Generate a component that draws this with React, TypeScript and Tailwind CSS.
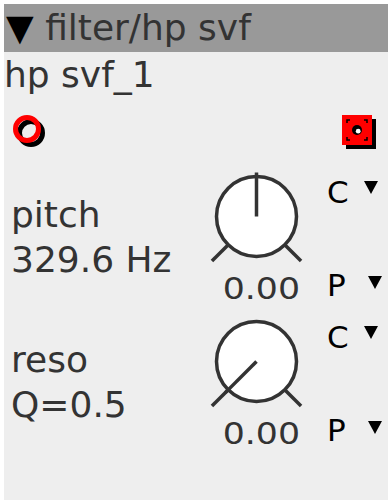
import React from 'react';

const INK = '#333333';

function Inlet() {
  return (
    <svg width="36" height="36" viewBox="0 0 36 36">
      <circle cx="20" cy="20" r="11.5" fill="none" stroke="#000" strokeWidth="5" />
      <circle cx="16" cy="16" r="11.5" fill="none" stroke="#ff0000" strokeWidth="5" />
    </svg>
  );
}

function Outlet() {
  return (
    <svg width="36" height="36" viewBox="0 0 36 36">
      <rect x="6" y="6" width="30" height="30" fill="#000" />
      <rect x="2" y="2" width="30" height="30" fill="#ff0000" />
      {/* focus corners */}
      <path
        d="M7 10 V7 H10 M24 7 H27 V10 M7 24 V27 H10 M24 27 H27 V24"
        fill="none"
        stroke="#000"
        strokeWidth="1.5"
      />
      <circle cx="17" cy="17" r="5" fill="#000" />
      <circle cx="18.2" cy="18.2" r="2.4" fill="#fff" />
    </svg>
  );
}

function Knob({ angle }: { angle: number }) {
  // angle in degrees, 0 = up, negative = counter-clockwise
  const cx = 50.5;
  const cy = 46.5;
  const rad = (angle * Math.PI) / 180;
  const px = cx + Math.sin(rad) * 44;
  const py = cy - Math.cos(rad) * 44;
  const d = Math.SQRT1_2;
  return (
    <svg width="100" height="95" viewBox="0 0 100 95">
      <circle cx={cx} cy={cy} r="40" fill="#fff" stroke={INK} strokeWidth="3.5" />
      <line x1={cx - 41 * d} y1={cy + 41 * d} x2={cx - 63 * d} y2={cy + 63 * d} stroke={INK} strokeWidth="3.5" />
      <line x1={cx + 41 * d} y1={cy + 41 * d} x2={cx + 63 * d} y2={cy + 63 * d} stroke={INK} strokeWidth="3.5" />
      <line x1={cx} y1={cy} x2={px} y2={py} stroke={INK} strokeWidth="3.5" />
    </svg>
  );
}

function Arrow() {
  return (
    <svg width="14" height="13" viewBox="0 0 14 13">
      <polygon points="0,0 14,0 7,13" fill="#000" />
    </svg>
  );
}

function ParamRow({ name, value, angle }: { name: string; value: string; angle: number }) {
  return (
    <div className="flex h-[145px]">
      <div className="w-[202px] pl-[7px] pt-[22px] text-[36px] leading-[45px] text-[#333]">
        <div>{name}</div>
        <div>{value}</div>
      </div>
      <div className="w-[100px] flex flex-col">
        <Knob angle={angle} />
        <div className="mt-[8px] pr-[6px] text-right text-[31px] leading-[31px] text-[#333]">
          <span className="inline-block origin-right scale-x-[1.12]">0.00</span>
        </div>
      </div>
      <div className="flex-1 pl-[21px] pt-[7px] text-[31px] leading-[31px] text-black">
        <div className="flex items-start">
          <span className="w-[22px]">C</span>
          <span className="ml-[15px] mt-[4px]">
            <Arrow />
          </span>
        </div>
        <div className="flex items-start mt-[62px]">
          <span className="w-[22px]">P</span>
          <span className="ml-[19px] mt-[6px]">
            <Arrow />
          </span>
        </div>
      </div>
    </div>
  );
}

export default function App() {
  return (
    <div className="w-[392px] h-[504px] bg-white p-1 font-['DejaVu_Sans',sans-serif]">
      <div className="h-full bg-[#eeeeee] flex flex-col">
        {/* Header */}
        <div className="h-12 pl-[2px] bg-[#999999] text-[36px] leading-[48px] text-[#333] whitespace-nowrap">
          <span className="text-black">▼</span> filter/hp svf
        </div>

        {/* Instance name */}
        <div className="h-[46px] text-[36px] leading-[46px] text-[#333] whitespace-nowrap">hp svf_1</div>

        {/* Inlet / outlet */}
        <div className="h-[72px] flex justify-between items-start pt-[15px] pl-[7px] pr-[12px]">
          <Inlet />
          <Outlet />
        </div>

        <ParamRow name="pitch" value="329.6 Hz" angle={0} />
        <ParamRow name="reso" value="Q=0.5" angle={-135} />
      </div>
    </div>
  );
}
